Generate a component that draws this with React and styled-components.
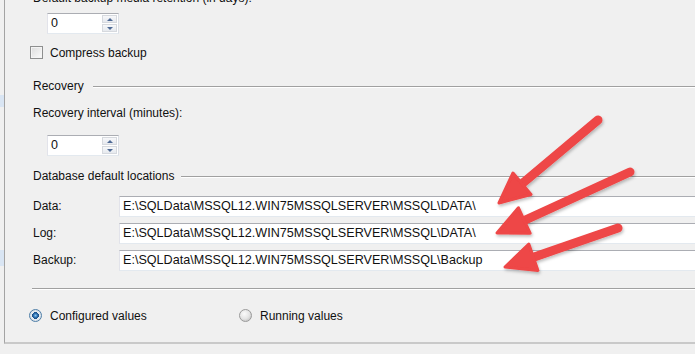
import React from "react";
import styled, { createGlobalStyle } from "styled-components";

const Global = createGlobalStyle`
  html, body { margin: 0; padding: 0; background: #f0f0f0; }
  body { font-family: "Liberation Sans", Arial, sans-serif; }
`;

const Frame = styled.div`
  position: relative;
  width: 695px;
  height: 354px;
  overflow: hidden;
  background: #f0f0f0;
  display: flex;
  flex-direction: column;
  font-family: "Liberation Sans", Arial, sans-serif;
  font-size: 12px;
  color: #111;
`;

const Main = styled.div`
  display: flex;
  height: 344px;
  flex: none;
`;

const Rail = styled.div`
  width: 4px;
  display: flex;
  flex-direction: column;
`;

const Highlight = styled.div`
  margin-top: ${(p) => p.$gap}px;
  height: ${(p) => p.$h}px;
  background: #d9e5f3;
`;

const Panel = styled.div`
  flex: 1;
  box-sizing: border-box;
  border-left: 1px solid #a3a3a3;
  border-bottom: 2px solid #c9c9c9;
  padding-left: 28px;
  display: flex;
  flex-direction: column;
`;

const Footer = styled.div`
  flex: 1;
  background: #f0f0f0;
`;

const Label = styled.div`
  line-height: 15px;
  height: 15px;
  white-space: nowrap;
  margin-top: ${(p) => p.$mt || 0}px;
`;

const Spin = styled.div`
  margin-top: ${(p) => p.$mt}px;
  margin-left: 14px;
  width: 72px;
  height: 21px;
  box-sizing: border-box;
  background: #fff;
  border: 1px solid #abadb3;
  border-left-color: #e2e3ea;
  border-right-color: #dbdfe6;
  border-bottom-color: #e3e9ef;
  display: flex;
  align-items: stretch;
`;

const SpinValue = styled.div`
  flex: 1;
  padding-left: 3px;
  line-height: 19px;
  font-size: 12.5px;
`;

const SpinButtons = styled.div`
  width: 15px;
  margin: 1px 1px 1px 0;
  display: flex;
  flex-direction: column;
  gap: 1px;
`;

const SpinBtn = styled.div`
  flex: 1;
  box-sizing: border-box;
  border: 1px solid #d6d9de;
  background: linear-gradient(#f7f8fa, #e6e9ee);
  display: flex;
  align-items: center;
  justify-content: center;
`;

const Tri = styled.div`
  width: 0;
  height: 0;
  border-left: 3px solid transparent;
  border-right: 3px solid transparent;
  ${(p) =>
    p.$down
      ? "border-top: 3px solid #4f6a95;"
      : "border-bottom: 3px solid #4f6a95;"}
`;

const CheckRow = styled.div`
  margin-top: ${(p) => p.$mt}px;
  margin-left: -3px;
  display: flex;
  align-items: center;
  height: 15px;
`;

const Check = styled.div`
  width: 13px;
  height: 13px;
  box-sizing: border-box;
  border: 1px solid #8e8f8f;
  background: linear-gradient(135deg, #dcdcdc, #fbfbfb);
  box-shadow: inset 0 0 0 1px #f4f4f4;
  margin-right: 7px;
`;

const Heading = styled.div`
  margin-top: ${(p) => p.$mt}px;
  display: flex;
  align-items: center;
  height: 15px;
  line-height: 15px;
  white-space: nowrap;
`;

const Rule = styled.div`
  flex: 1;
  margin-left: ${(p) => p.$ml}px;
  height: 0;
  border-top: 1px solid #a0a0a0;
  border-bottom: 1px solid #ffffff;
`;

const FieldRow = styled.div`
  margin-top: ${(p) => p.$mt}px;
  display: flex;
  align-items: center;
  height: 21px;
  margin-right: -10px;
`;

const FieldLabel = styled.div`
  width: 86px;
  line-height: 15px;
`;

const Field = styled.div`
  flex: 1;
  height: 21px;
  box-sizing: border-box;
  background: #fff;
  border: 1px solid #abadb3;
  border-left-color: #e2e3ea;
  border-bottom-color: #e3e9ef;
  padding-left: 3px;
  line-height: 19px;
  font-size: 12.6px;
  white-space: nowrap;
  color: #111;
`;

const Separator = styled.div`
  margin-top: ${(p) => p.$mt}px;
  margin-left: -1px;
  height: 0;
  border-top: 1px solid #a0a0a0;
  border-bottom: 1px solid #ffffff;
`;

const RadioRow = styled.div`
  margin-top: ${(p) => p.$mt}px;
  margin-left: -4px;
  display: flex;
  align-items: center;
  height: 15px;
`;

const RadioItem = styled.div`
  display: flex;
  align-items: center;
  width: ${(p) => p.$w || "auto"};
`;

const Radio = styled.div`
  width: 13px;
  height: 13px;
  box-sizing: border-box;
  border-radius: 50%;
  border: 1px solid ${(p) => (p.$on ? "#4f7fa8" : "#9a9a9a")};
  background: ${(p) =>
    p.$on
      ? "radial-gradient(circle at 50% 50%, #8ec6ef 0, #2b6fb0 2px, #1d4f86 3.2px, #e9eef3 3.6px, #d4dbe3 6px)"
      : "radial-gradient(circle at 40% 35%, #fafafa 0, #e4e4e4 5px, #cfcfcf 7px)"};
  margin-right: 8px;
`;

const ArrowLayer = styled.svg`
  position: absolute;
  left: 0;
  top: 0;
  pointer-events: none;
`;

const arrows = [
  { tail: [598, 120], tip: [499, 203] },
  { tail: [630, 172], tip: [497, 233] },
  { tail: [618, 228], tip: [505, 267] },
];

function Arrow({ tail, tip }) {
  const dx = tip[0] - tail[0];
  const dy = tip[1] - tail[1];
  const len = Math.hypot(dx, dy);
  const ux = dx / len;
  const uy = dy / len;
  const px = -uy;
  const py = ux;
  const headLen = 30;
  const half = 14;
  const bx = tip[0] - ux * headLen;
  const by = tip[1] - uy * headLen;
  const w1 = [bx + px * half, by + py * half];
  const w2 = [bx - px * half, by - py * half];
  const sx = tip[0] - ux * (headLen - 6);
  const sy = tip[1] - uy * (headLen - 6);
  return (
    <g>
      <line
        x1={tail[0]}
        y1={tail[1]}
        x2={sx}
        y2={sy}
        stroke="#ee4646"
        strokeWidth="9"
        strokeLinecap="round"
      />
      <polygon
        points={`${tip[0]},${tip[1]} ${w1[0]},${w1[1]} ${w2[0]},${w2[1]}`}
        fill="#ee4646"
        stroke="#ee4646"
        strokeWidth="3"
        strokeLinejoin="round"
      />
    </g>
  );
}

const paths = [
  { label: "Data:", value: "E:\\SQLData\\MSSQL12.WIN75MSSQLSERVER\\MSSQL\\DATA\\", mt: 12 },
  { label: "Log:", value: "E:\\SQLData\\MSSQL12.WIN75MSSQLSERVER\\MSSQL\\DATA\\", mt: 6 },
  { label: "Backup:", value: "E:\\SQLData\\MSSQL12.WIN75MSSQLSERVER\\MSSQL\\Backup", mt: 6 },
];

function SpinBox({ mt }) {
  return (
    <Spin $mt={mt}>
      <SpinValue>0</SpinValue>
      <SpinButtons>
        <SpinBtn>
          <Tri />
        </SpinBtn>
        <SpinBtn>
          <Tri $down />
        </SpinBtn>
      </SpinButtons>
    </Spin>
  );
}

export default function App() {
  return (
    <Frame>
      <Global />
      <Main>
        <Rail>
          <Highlight $gap={95} $h={12} />
          <Highlight $gap={143} $h={16} />
        </Rail>
        <Panel>
          <Label $mt={-9}>Default backup media retention (in days):</Label>
          <SpinBox mt={7} />
          <CheckRow $mt={11}>
            <Check />
            Compress backup
          </CheckRow>
          <Heading $mt={19}>
            Recovery
            <Rule $ml={9} />
          </Heading>
          <Label $mt={12}>Recovery interval (minutes):</Label>
          <SpinBox mt={14} />
          <Heading $mt={13}>
            Database default locations
            <Rule $ml={7} />
          </Heading>
          {paths.map((p) => (
            <FieldRow key={p.label} $mt={p.mt}>
              <FieldLabel>{p.label}</FieldLabel>
              <Field>{p.value}</Field>
            </FieldRow>
          ))}
          <Separator $mt={17} />
          <RadioRow $mt={18}>
            <RadioItem $w="210px">
              <Radio $on />
              Configured values
            </RadioItem>
            <RadioItem>
              <Radio />
              Running values
            </RadioItem>
          </RadioRow>
        </Panel>
      </Main>
      <Footer />
      <ArrowLayer width="695" height="354" viewBox="0 0 695 354">
        <defs>
          <filter id="sh" x="-20%" y="-20%" width="140%" height="140%">
            <feDropShadow dx="1" dy="2" stdDeviation="1.5" floodColor="#000" floodOpacity="0.25" />
          </filter>
        </defs>
        <g filter="url(#sh)">
          {arrows.map((a, i) => (
            <Arrow key={i} {...a} />
          ))}
        </g>
      </ArrowLayer>
    </Frame>
  );
}
